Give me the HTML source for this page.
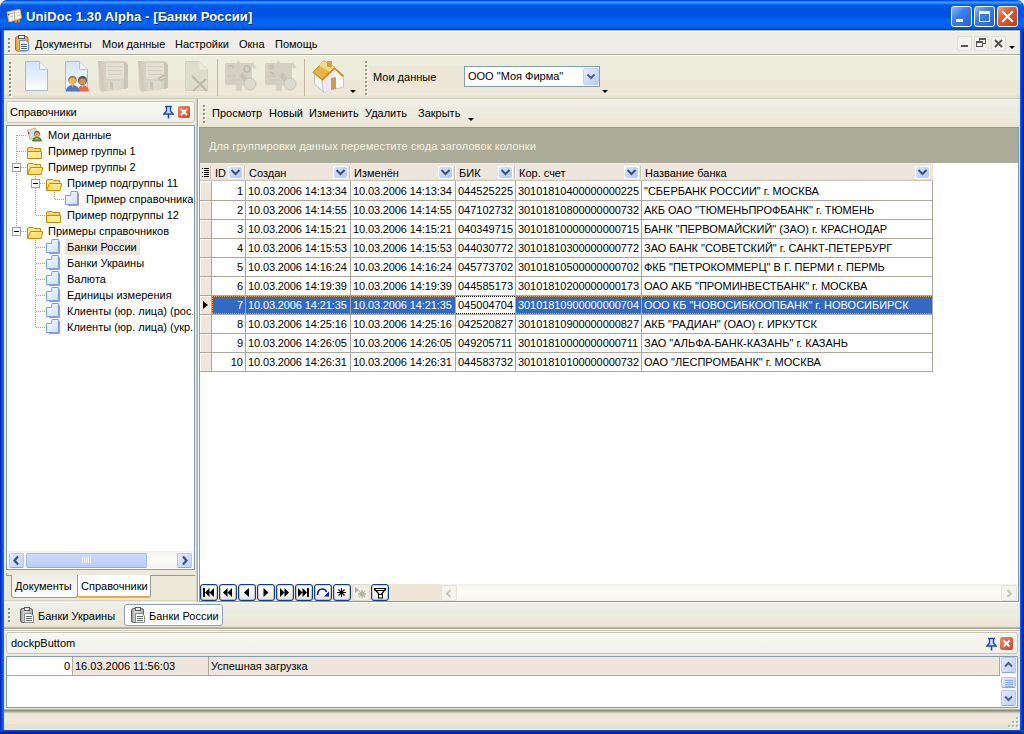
<!DOCTYPE html><html><head><meta charset="utf-8"><title>UniDoc</title><style>
*{margin:0;padding:0;box-sizing:border-box}
html,body{width:1024px;height:734px;overflow:hidden;background:#ECE9D8}
body{position:relative;font-family:"Liberation Sans",sans-serif;font-size:11px;color:#000}
div{position:absolute}
.t{white-space:pre;line-height:13px}
</style></head><body>
<div style="left:0px;top:0px;width:10px;height:10px;background:#F4F4F4"></div>
<div style="left:1014px;top:0px;width:10px;height:10px;background:#F4F4F4"></div>
<div style="left:0px;top:0px;width:1024px;height:30px;background:linear-gradient(to bottom,#0050E0 0px,#0050E0 1px,#2A80F8 1px,#2A80F8 2px,#3A96FF 2px,#3A96FF 3px,#2088FC 3px,#2088FC 4px,#0868F0 4px,#0868F0 5px,#005AE8 5px,#0054E3 8px,#0052E2 16px,#0062F2 20px,#0066F8 24px,#0062F4 27px,#0050E0 28px,#0050E0 29px,#0040C8 29px);border-radius:7px 7px 0 0"></div>
<div style="left:0px;top:30px;width:4px;height:704px;background:linear-gradient(to right,#0020B8 0,#0038D0 1px,#0050E6 2px,#1264F2 3px,#1264F2 4px)"></div>
<div style="left:1020px;top:30px;width:4px;height:704px;background:linear-gradient(to right,#1264F2 0,#0050E6 1px,#0038D0 2px,#0020B0 3px,#0018A0 4px)"></div>
<div style="left:0px;top:730px;width:1024px;height:4px;background:linear-gradient(to bottom,#0050E8 0,#0040D4 1px,#002CB4 2px,#001A94 3px,#001890 4px)"></div>
<div style="left:5px;top:8px;width:18px;height:16px"><svg width="18" height="16" viewBox="0 0 18 16"><path d="M2 4 L9 2.5 L10 12.5 L4 14 Z" fill="#EEF4FF" stroke="#F0A030" stroke-width="1"/><path d="M9 2.5 L15 1.5 L16.5 10 L10 12.5 Z" fill="#F8FAFF" stroke="#F0B040" stroke-width="1"/><path d="M4 6 L8 5 M5 9 L8.5 8" stroke="#A8B8E0"/><path d="M11.5 5 L14.5 4.5 M12 7.5 L15 7" stroke="#B0C0E8"/><rect x="3" y="5.5" width="1.5" height="2" fill="#E04020"/><path d="M11 12 V15 M14 11 V14.5" stroke="#F0A020" stroke-width="1.5"/></svg></div>
<div class="t" style="left:26px;top:9px;font-size:13px;font-weight:bold;color:#fff;line-height:15px;letter-spacing:0.1px;text-shadow:1px 1px 0 #0A2C9A">UniDoc 1.30 Alpha - [Банки России]</div>
<div style="left:951px;top:6px;width:21px;height:21px;background:linear-gradient(135deg,#8EB8FF 0%,#3C7EF0 40%,#2460DC 100%);border:1px solid #fff;border-radius:3px"><div style="left:4px;top:12px;width:7px;height:3px;background:#fff"></div></div>
<div style="left:974px;top:6px;width:21px;height:21px;background:linear-gradient(135deg,#8EB8FF 0%,#3C7EF0 40%,#2460DC 100%);border:1px solid #fff;border-radius:3px"><div style="left:4px;top:4px;width:11px;height:11px;border:1px solid #fff;border-top-width:3px"></div></div>
<div style="left:997px;top:6px;width:21px;height:21px;background:linear-gradient(135deg,#F0A080 0%,#E05A30 40%,#C83C10 100%);border:1px solid #fff;border-radius:3px"><svg width="21" height="21" style="position:absolute;left:0;top:0"><path d="M5 5 L14 14 M14 5 L5 14" stroke="#fff" stroke-width="2.2" stroke-linecap="square"/></svg></div>
<div style="left:4px;top:30px;width:1016px;height:26px;background:linear-gradient(to bottom,#B8B498 0,#B8B498 1px,#FFFFFF 1px,#FFFFFF 2px,#EEEDE6 2px,#EEEDE6 23px,#F0F0E2 23px,#F0F0E2 24px,#ACAC98 24px,#ACAC98 25px,#FFFFFF 25px)"></div>
<div style="left:9px;top:39px;width:2px;height:2px;background:#FFFFFF"></div><div style="left:8px;top:38px;width:2px;height:2px;background:#8E8E7E"></div><div style="left:9px;top:43px;width:2px;height:2px;background:#FFFFFF"></div><div style="left:8px;top:42px;width:2px;height:2px;background:#8E8E7E"></div><div style="left:9px;top:47px;width:2px;height:2px;background:#FFFFFF"></div><div style="left:8px;top:46px;width:2px;height:2px;background:#8E8E7E"></div><div style="left:9px;top:51px;width:2px;height:2px;background:#FFFFFF"></div><div style="left:8px;top:50px;width:2px;height:2px;background:#8E8E7E"></div>
<div style="left:15px;top:35px;width:15px;height:17px"><svg width="15" height="17" viewBox="0 0 15 17"><defs><linearGradient id="cbg" x1="0" y1="0" x2="1" y2="0"><stop offset="0" stop-color="#E89830"/><stop offset="0.4" stop-color="#FCD860"/><stop offset="1" stop-color="#E8A030"/></linearGradient></defs><rect x="0.5" y="1.5" width="12.5" height="14.5" rx="2" fill="url(#cbg)" stroke="#C06818"/><rect x="3.5" y="0.5" width="6" height="3" fill="#E8ECF4" stroke="#585858"/><path d="M4.5 5.5 H11 L13.5 8 V15.5 H4.5 Z" fill="#F4F8FF" stroke="#6C8CD4"/><rect x="5" y="6" width="5" height="3" fill="#D8ECFC"/><path d="M6 9.5 H12 M6 11.5 H12 M6 13.5 H12" stroke="#4A68A8"/></svg></div>
<div class="t" style="left:35px;top:38px;">Документы</div>
<div class="t" style="left:102px;top:38px;">Мои данные</div>
<div class="t" style="left:175px;top:38px;">Настройки</div>
<div class="t" style="left:239px;top:38px;">Окна</div>
<div class="t" style="left:275px;top:38px;">Помощь</div>
<div style="left:957px;top:36px;width:15px;height:15px;background:#F4F3EE;border:1px solid #E0DED2;border-radius:2px"><div style="left:3px;top:8px;width:7px;height:2px;background:#555"></div></div>
<div style="left:974px;top:36px;width:15px;height:15px;background:#F4F3EE;border:1px solid #E0DED2;border-radius:2px"><div style="left:4px;top:1px;width:7px;height:6px;border:1px solid #555;border-top-width:2px"></div><div style="left:1px;top:4px;width:7px;height:6px;border:1px solid #555;border-top-width:2px;background:#F4F3EE"></div></div>
<div style="left:991px;top:36px;width:15px;height:15px;background:#F4F3EE;border:1px solid #E0DED2;border-radius:2px"><svg width="13" height="13" style="position:absolute;left:0;top:0"><path d="M3 3 L10 10 M10 3 L3 10" stroke="#555" stroke-width="2"/></svg></div>
<div style="left:1009px;top:46px;width:0;height:0;border-left:3px solid transparent;border-right:3px solid transparent;border-top:3px solid #000"></div>
<div style="left:4px;top:56px;width:1016px;height:43px;background:linear-gradient(to bottom,#EDEDDE 0,#EDEDDE 24px,#EEE6D6 24px,#EEE6D6 39px,#E4E4D4 39px,#E4E4D4 40px,#E2E2CC 40px,#E2E2CC 42px,#CCCCB8 42px)"></div>
<div style="left:10px;top:63px;width:2px;height:2px;background:#FFFFFF"></div><div style="left:9px;top:62px;width:2px;height:2px;background:#8E8E7E"></div><div style="left:10px;top:67px;width:2px;height:2px;background:#FFFFFF"></div><div style="left:9px;top:66px;width:2px;height:2px;background:#8E8E7E"></div><div style="left:10px;top:71px;width:2px;height:2px;background:#FFFFFF"></div><div style="left:9px;top:70px;width:2px;height:2px;background:#8E8E7E"></div><div style="left:10px;top:75px;width:2px;height:2px;background:#FFFFFF"></div><div style="left:9px;top:74px;width:2px;height:2px;background:#8E8E7E"></div><div style="left:10px;top:79px;width:2px;height:2px;background:#FFFFFF"></div><div style="left:9px;top:78px;width:2px;height:2px;background:#8E8E7E"></div><div style="left:10px;top:83px;width:2px;height:2px;background:#FFFFFF"></div><div style="left:9px;top:82px;width:2px;height:2px;background:#8E8E7E"></div><div style="left:10px;top:87px;width:2px;height:2px;background:#FFFFFF"></div><div style="left:9px;top:86px;width:2px;height:2px;background:#8E8E7E"></div><div style="left:10px;top:91px;width:2px;height:2px;background:#FFFFFF"></div><div style="left:9px;top:90px;width:2px;height:2px;background:#8E8E7E"></div><div style="left:10px;top:95px;width:2px;height:2px;background:#FFFFFF"></div><div style="left:9px;top:94px;width:2px;height:2px;background:#8E8E7E"></div>
<div style="left:24px;top:60px;width:26px;height:32px"><svg width="26" height="32" viewBox="0 0 26 32"><defs><linearGradient id="dg" x1="0" y1="0" x2="0" y2="1"><stop offset="0" stop-color="#D4E4F8"/><stop offset="0.6" stop-color="#E8F2FC"/><stop offset="1" stop-color="#FFFFFF"/></linearGradient></defs><path d="M1.5 1.5 H15.5 L23.5 9.5 V30.5 H1.5 Z" fill="url(#dg)" stroke="#A8B8D8"/><path d="M15.5 1.5 V9.5 H23.5" fill="#F4F8FC" stroke="#B8C4D8"/></svg></div>
<div style="left:64px;top:60px;width:27px;height:33px"><svg width="27" height="33" viewBox="0 0 27 33"><path d="M1.5 1.5 H15.5 L23.5 9.5 V30.5 H1.5 Z" fill="url(#dg)" stroke="#A8B8D8"/><path d="M15.5 1.5 V9.5 H23.5" fill="#F4F8FC" stroke="#B8C4D8"/><circle cx="18.5" cy="20.5" r="4.5" fill="#585050"/><circle cx="18.5" cy="21.5" r="3.3" fill="#D8904C"/><path d="M14 31.5 Q14 25 18.5 25 Q24 25 25 31.5 Z" fill="#E86840"/><path d="M17.5 25.5 L18.5 28 L19.5 25.5" fill="#C8E0F0"/><circle cx="8.5" cy="20" r="4.3" fill="#8C7860"/><circle cx="8.5" cy="21.2" r="3.5" fill="#F4B840"/><path d="M2 31.5 Q2 25 8.5 25 Q14.5 25 15.5 31.5 Z" fill="#4A78D0"/><path d="M8 25.5 L8.5 28 L9 25.5" fill="#E0F0FF"/></svg></div>
<div style="left:96px;top:58px;width:34px;height:36px"><svg width="34" height="36" viewBox="0 0 34 36"><path d="M2 3 H29 L32 6 V30 L6 34 L3 31 Z" fill="#D6D2C4"/><path d="M28 4 L32 7 V30 L28 31 Z" fill="#C8C4B6"/><path d="M2 3 L6 34 L9 33 L6 3 Z" fill="#CFCABD"/><rect x="10" y="5" width="18" height="16" fill="#E2E0D4"/><path d="M12 8.5 H26 M12 12.5 H26 M12 16.5 H26" stroke="#D0CCBE"/><path d="M12 23 H25 V32 L12 33 Z" fill="#DCD8CC"/><rect x="14" y="24" width="3" height="7" fill="#C8C4B6"/></svg></div>
<div style="left:136px;top:58px;width:34px;height:36px"><svg width="34" height="36" viewBox="0 0 34 36"><path d="M2 3 H29 L32 6 V30 L6 34 L3 31 Z" fill="#D6D2C4"/><path d="M28 4 L32 7 V30 L28 31 Z" fill="#C8C4B6"/><path d="M2 3 L6 34 L9 33 L6 3 Z" fill="#CFCABD"/><rect x="10" y="5" width="18" height="16" fill="#E2E0D4"/><path d="M12 8.5 H26 M12 12.5 H26 M12 16.5 H26" stroke="#D0CCBE"/><path d="M12 23 H25 V32 L12 33 Z" fill="#DCD8CC"/><rect x="14" y="24" width="3" height="7" fill="#C8C4B6"/><path d="M21 20 L28 16 L31 20 L25 24 Z" fill="#C4C0B2"/><path d="M24 21 L29 19" stroke="#DEDBD0"/></svg></div>
<div style="left:184px;top:60px;width:25px;height:32px"><svg width="25" height="32" viewBox="0 0 25 32"><path d="M1.5 1.5 H15.5 L23.5 9.5 V30.5 H1.5 Z" fill="#DEDCCC" stroke="#D6CEC0"/><path d="M15.5 1.5 V9.5 H23.5" fill="#ECEAE0"/><path d="M8 16 L23 31 M22 19 L9 31" stroke="#BCBAA8" stroke-width="2"/></svg></div>
<div style="left:217px;top:59px;width:1px;height:37px;background:#C5B99C"></div>
<div style="left:222px;top:58px;width:36px;height:36px"><svg width="36" height="36" viewBox="0 0 36 36"><rect x="3" y="5" width="27" height="22" rx="1" fill="#D4D0C4"/><path d="M16.5 2 L19 6 H14 Z" fill="#D4D0C4"/><path d="M31 4 L33 8 L35 9 L32 11 L30 9 L28 8 Z" fill="#D4D0C4"/><circle cx="25" cy="11" r="3" fill="none" stroke="#BDB9AC" stroke-width="1.5"/><path d="M6 9 Q9 6 12 10" stroke="#C0BCAE" fill="none" stroke-width="1.5"/><path d="M5 18 H14 M7 22 H18" stroke="#CCC8BA" stroke-width="1.5"/><rect x="14" y="26" width="6" height="7" fill="#D4D0C4"/><path d="M19 16 L25 24" stroke="#C6C2B4" stroke-width="5"/><circle cx="28" cy="26" r="6" fill="#DCDACE" stroke="#CAC6B8"/></svg></div>
<div style="left:262px;top:58px;width:36px;height:36px"><svg width="36" height="36" viewBox="0 0 36 36"><rect x="3" y="5" width="27" height="22" rx="1" fill="#D4D0C4"/><path d="M16.5 2 L19 6 H14 Z" fill="#D4D0C4"/><path d="M31 4 L33 8 L35 9 L32 11 L30 9 L28 8 Z" fill="#D4D0C4"/><path d="M6 8 L11 6 L13 10 L8 12 Z" fill="#C6C2B4"/><path d="M8 14 L12 16" stroke="#C0BCAE" stroke-width="1.5"/><path d="M5 18 H14 M7 22 H18" stroke="#CCC8BA" stroke-width="1.5"/><rect x="14" y="26" width="6" height="7" fill="#D4D0C4"/><path d="M19 16 L25 24" stroke="#C6C2B4" stroke-width="5"/><circle cx="28" cy="26" r="6" fill="#DCDACE" stroke="#CAC6B8"/></svg></div>
<div style="left:304px;top:59px;width:1px;height:37px;background:#C5B99C"></div>
<div style="left:308px;top:56px;width:40px;height:40px"><svg width="40" height="40" viewBox="0 0 40 40"><path d="M6.5 18 L14 24 L15.5 36 L6.5 28 Z" fill="#F4F4F4" stroke="#B8B8B8" stroke-width="0.8"/><path d="M14 24 L26.5 12 L35.5 19.5 V31 L15.5 36 Z" fill="#FFFFFF" stroke="#B8B8B8" stroke-width="0.8"/><path d="M15 24 L26.5 13 L27 34 L16 36 Z" fill="#ECEAF0"/><path d="M23 22 L28 21 V33 L23 34 Z" fill="#D49A40"/><path d="M5 16.5 L15.5 5 L26.5 11 L14 23.5 Z" fill="#E8B440" stroke="#C08020" stroke-width="1"/><path d="M15.5 5 L26.5 11 L22 16 L11 9.5 Z" fill="#F4D890"/><path d="M26.5 11 L36 19.5 L34.5 21 L26.5 13.5 L14.5 25 L13.5 23.5 Z" fill="#D09030"/><rect x="19" y="5" width="5" height="6" fill="#D8A040"/></svg></div>
<div style="left:350px;top:90px;width:0;height:0;border-left:3px solid transparent;border-right:3px solid transparent;border-top:3px solid #000"></div>
<div style="left:366px;top:62px;width:2px;height:2px;background:#FFFFFF"></div><div style="left:365px;top:61px;width:2px;height:2px;background:#9A9A8A"></div><div style="left:366px;top:66px;width:2px;height:2px;background:#FFFFFF"></div><div style="left:365px;top:65px;width:2px;height:2px;background:#9A9A8A"></div><div style="left:366px;top:70px;width:2px;height:2px;background:#FFFFFF"></div><div style="left:365px;top:69px;width:2px;height:2px;background:#9A9A8A"></div><div style="left:366px;top:74px;width:2px;height:2px;background:#FFFFFF"></div><div style="left:365px;top:73px;width:2px;height:2px;background:#9A9A8A"></div><div style="left:366px;top:78px;width:2px;height:2px;background:#FFFFFF"></div><div style="left:365px;top:77px;width:2px;height:2px;background:#9A9A8A"></div><div style="left:366px;top:82px;width:2px;height:2px;background:#FFFFFF"></div><div style="left:365px;top:81px;width:2px;height:2px;background:#9A9A8A"></div><div style="left:366px;top:86px;width:2px;height:2px;background:#FFFFFF"></div><div style="left:365px;top:85px;width:2px;height:2px;background:#9A9A8A"></div><div style="left:366px;top:90px;width:2px;height:2px;background:#FFFFFF"></div><div style="left:365px;top:89px;width:2px;height:2px;background:#9A9A8A"></div><div style="left:366px;top:94px;width:2px;height:2px;background:#FFFFFF"></div><div style="left:365px;top:93px;width:2px;height:2px;background:#9A9A8A"></div>
<div style="left:370px;top:66px;width:228px;height:21px;background:#EBE6D6"></div>
<div class="t" style="left:373px;top:71px;">Мои данные</div>
<div style="left:464px;top:66px;width:136px;height:21px;background:#fff;border:1px solid #7F9DB9"><div class="t" style="left:3px;top:3px;">ООО "Моя Фирма"</div><div style="left:118px;top:1px;width:16px;height:17px;background:linear-gradient(135deg,#E4ECFC,#B8CCF8);border-radius:2px;border:1px solid #C0D0F4"><svg width="14" height="15" style="position:absolute;left:0;top:0"><path d="M3.5 5.5 L7 9 L10.5 5.5" stroke="#4D6185" stroke-width="2" fill="none"/></svg></div></div>
<div style="left:602px;top:90px;width:0;height:0;border-left:3px solid transparent;border-right:3px solid transparent;border-top:3px solid #000"></div>
<div style="left:4px;top:99px;width:193px;height:506px;background:#ECE9D8"></div>
<div style="left:6px;top:101px;width:189px;height:22px;background:linear-gradient(to bottom,#FFFFFF 0,#FFFFFF 1px,#F6F6F0 1px,#F4F4EE 60%,#F0F0E8);border:1px solid #C8C6B2;border-radius:3px"></div>
<div class="t" style="left:10px;top:106px;">Справочники</div>
<div style="left:163px;top:105px;width:11px;height:14px"><svg width="11" height="14" viewBox="0 0 11 14"><path d="M2 1.5 H9 M3.5 1.5 V6 L1 9 H10 L7.5 6 V1.5" fill="#CFE0FF" stroke="#1848C8" stroke-width="1.4"/><path d="M5.5 9 V13.5" stroke="#1848C8" stroke-width="1.6"/></svg></div>
<div style="left:178px;top:106px;width:12px;height:12px;background:linear-gradient(135deg,#F08868,#D84020);border-radius:2px"><svg width="12" height="12" style="position:absolute;left:0;top:0"><path d="M3 3 L9 9 M9 3 L3 9" stroke="#fff" stroke-width="2"/></svg></div>
<div style="left:6px;top:125px;width:189px;height:445px;background:#fff;border:1px solid #7F9DB9"></div>
<div style="left:16px;top:135px;width:1px;height:97px;background:repeating-linear-gradient(to bottom,#A0A0A0 0 1px,transparent 1px 2px)"></div>
<div style="left:17px;top:135px;width:9px;height:1px;background:repeating-linear-gradient(to right,#A0A0A0 0 1px,transparent 1px 2px)"></div>
<div style="left:17px;top:151px;width:9px;height:1px;background:repeating-linear-gradient(to right,#A0A0A0 0 1px,transparent 1px 2px)"></div>
<div style="left:21px;top:167px;width:5px;height:1px;background:repeating-linear-gradient(to right,#A0A0A0 0 1px,transparent 1px 2px)"></div>
<div style="left:21px;top:231px;width:5px;height:1px;background:repeating-linear-gradient(to right,#A0A0A0 0 1px,transparent 1px 2px)"></div>
<div style="left:35px;top:176px;width:1px;height:40px;background:repeating-linear-gradient(to bottom,#A0A0A0 0 1px,transparent 1px 2px)"></div>
<div style="left:40px;top:183px;width:5px;height:1px;background:repeating-linear-gradient(to right,#A0A0A0 0 1px,transparent 1px 2px)"></div>
<div style="left:36px;top:215px;width:9px;height:1px;background:repeating-linear-gradient(to right,#A0A0A0 0 1px,transparent 1px 2px)"></div>
<div style="left:54px;top:192px;width:1px;height:8px;background:repeating-linear-gradient(to bottom,#A0A0A0 0 1px,transparent 1px 2px)"></div>
<div style="left:55px;top:199px;width:9px;height:1px;background:repeating-linear-gradient(to right,#A0A0A0 0 1px,transparent 1px 2px)"></div>
<div style="left:35px;top:240px;width:1px;height:88px;background:repeating-linear-gradient(to bottom,#A0A0A0 0 1px,transparent 1px 2px)"></div>
<div style="left:36px;top:247px;width:9px;height:1px;background:repeating-linear-gradient(to right,#A0A0A0 0 1px,transparent 1px 2px)"></div>
<div style="left:36px;top:263px;width:9px;height:1px;background:repeating-linear-gradient(to right,#A0A0A0 0 1px,transparent 1px 2px)"></div>
<div style="left:36px;top:279px;width:9px;height:1px;background:repeating-linear-gradient(to right,#A0A0A0 0 1px,transparent 1px 2px)"></div>
<div style="left:36px;top:295px;width:9px;height:1px;background:repeating-linear-gradient(to right,#A0A0A0 0 1px,transparent 1px 2px)"></div>
<div style="left:36px;top:311px;width:9px;height:1px;background:repeating-linear-gradient(to right,#A0A0A0 0 1px,transparent 1px 2px)"></div>
<div style="left:36px;top:327px;width:9px;height:1px;background:repeating-linear-gradient(to right,#A0A0A0 0 1px,transparent 1px 2px)"></div>
<div style="left:26px;top:127px;width:18px;height:17px"><svg width="18" height="17" viewBox="0 0 18 17"><path d="M1.5 3.5 L9.5 1 L12 10 L4 12.5 Z" fill="#C8E0FC" stroke="#F0A860"/><rect x="2" y="5" width="1.5" height="2" fill="#E04020"/><circle cx="11" cy="6.8" r="2.9" fill="#6A5028"/><circle cx="11" cy="7.6" r="2.3" fill="#F4A838"/><path d="M6.5 14 Q7 10.2 11 10.2 Q15 10.2 15.5 14 Z" fill="#6C9A50" stroke="#3C5A30" stroke-width="0.8"/><path d="M10 10.7 L11 13 L12 10.7" fill="#B0D880"/></svg></div><div class="t" style="left:48px;top:129px;">Мои данные</div>
<div style="left:26px;top:143px;width:18px;height:17px"><svg width="18" height="17" viewBox="0 0 18 17"><path d="M1.5 15.5 V6 Q1.5 4.5 3 4.5 H7 L8 5.5 H14.5 V15.5 Z" fill="#F8D860" stroke="#C48E00"/><path d="M1.5 8.5 H15.5 V15.5 H1.5 Z" fill="#FFE690" stroke="#C48E00"/><path d="M3 10 H14" stroke="#FFF6C8"/></svg></div><div class="t" style="left:48px;top:145px;">Пример группы 1</div>
<div style="left:26px;top:159px;width:18px;height:17px"><svg width="18" height="17" viewBox="0 0 18 17"><path d="M1.5 15.5 V6 Q1.5 4.5 3 4.5 H7.5 L8.5 5.5 H14.5 V8.5" fill="#FFE680" stroke="#C48E00"/><path d="M1.5 15.5 L4.5 8.5 H16.5 V10 L15 15.5 Z" fill="#FFDC70" stroke="#C48E00"/><path d="M5.5 10 H15" stroke="#FFF6D0"/></svg></div><div class="t" style="left:48px;top:161px;">Пример группы 2</div><div style="left:12px;top:163px;width:9px;height:9px;background:#fff;border:1px solid #A0A09A"><div style="left:1px;top:3px;width:5px;height:1px;background:#000"></div></div>
<div style="left:45px;top:175px;width:18px;height:17px"><svg width="18" height="17" viewBox="0 0 18 17"><path d="M1.5 15.5 V6 Q1.5 4.5 3 4.5 H7.5 L8.5 5.5 H14.5 V8.5" fill="#FFE680" stroke="#C48E00"/><path d="M1.5 15.5 L4.5 8.5 H16.5 V10 L15 15.5 Z" fill="#FFDC70" stroke="#C48E00"/><path d="M5.5 10 H15" stroke="#FFF6D0"/></svg></div><div class="t" style="left:67px;top:177px;">Пример подгруппы 11</div><div style="left:31px;top:179px;width:9px;height:9px;background:#fff;border:1px solid #A0A09A"><div style="left:1px;top:3px;width:5px;height:1px;background:#000"></div></div>
<div style="left:64px;top:191px;width:18px;height:17px"><svg width="18" height="17" viewBox="0 0 18 17"><defs><linearGradient id="tdg" x1="0" y1="0" x2="1" y2="1"><stop offset="0" stop-color="#FFFFFF"/><stop offset="1" stop-color="#C8DCFC"/></linearGradient></defs><path d="M14.5 2 V14.5 H4" stroke="#A0A0A8" fill="none"/><path d="M1.5 4.5 H6.5 L7 0.5 H13.5 V13.5 H1.5 Z" fill="url(#tdg)" stroke="#7C9CE8"/><path d="M3 12 L7 8 L9 10 L12 6" stroke="#E0ECFF" fill="none"/></svg></div><div class="t" style="left:86px;top:193px;">Пример справочника</div>
<div style="left:45px;top:207px;width:18px;height:17px"><svg width="18" height="17" viewBox="0 0 18 17"><path d="M1.5 15.5 V6 Q1.5 4.5 3 4.5 H7 L8 5.5 H14.5 V15.5 Z" fill="#F8D860" stroke="#C48E00"/><path d="M1.5 8.5 H15.5 V15.5 H1.5 Z" fill="#FFE690" stroke="#C48E00"/><path d="M3 10 H14" stroke="#FFF6C8"/></svg></div><div class="t" style="left:67px;top:209px;">Пример подгруппы 12</div>
<div style="left:26px;top:223px;width:18px;height:17px"><svg width="18" height="17" viewBox="0 0 18 17"><path d="M1.5 15.5 V6 Q1.5 4.5 3 4.5 H7.5 L8.5 5.5 H14.5 V8.5" fill="#FFE680" stroke="#C48E00"/><path d="M1.5 15.5 L4.5 8.5 H16.5 V10 L15 15.5 Z" fill="#FFDC70" stroke="#C48E00"/><path d="M5.5 10 H15" stroke="#FFF6D0"/></svg></div><div class="t" style="left:48px;top:225px;">Примеры справочников</div><div style="left:12px;top:227px;width:9px;height:9px;background:#fff;border:1px solid #A0A09A"><div style="left:1px;top:3px;width:5px;height:1px;background:#000"></div></div>
<div style="left:45px;top:239px;width:18px;height:17px"><svg width="18" height="17" viewBox="0 0 18 17"><defs><linearGradient id="tdg" x1="0" y1="0" x2="1" y2="1"><stop offset="0" stop-color="#FFFFFF"/><stop offset="1" stop-color="#C8DCFC"/></linearGradient></defs><path d="M14.5 2 V14.5 H4" stroke="#A0A0A8" fill="none"/><path d="M1.5 4.5 H6.5 L7 0.5 H13.5 V13.5 H1.5 Z" fill="url(#tdg)" stroke="#7C9CE8"/><path d="M3 12 L7 8 L9 10 L12 6" stroke="#E0ECFF" fill="none"/></svg></div><div style="left:65px;top:239px;width:75px;height:16px;background:#EEE6DA"></div><div class="t" style="left:67px;top:241px;">Банки России</div>
<div style="left:45px;top:255px;width:18px;height:17px"><svg width="18" height="17" viewBox="0 0 18 17"><defs><linearGradient id="tdg" x1="0" y1="0" x2="1" y2="1"><stop offset="0" stop-color="#FFFFFF"/><stop offset="1" stop-color="#C8DCFC"/></linearGradient></defs><path d="M14.5 2 V14.5 H4" stroke="#A0A0A8" fill="none"/><path d="M1.5 4.5 H6.5 L7 0.5 H13.5 V13.5 H1.5 Z" fill="url(#tdg)" stroke="#7C9CE8"/><path d="M3 12 L7 8 L9 10 L12 6" stroke="#E0ECFF" fill="none"/></svg></div><div class="t" style="left:67px;top:257px;">Банки Украины</div>
<div style="left:45px;top:271px;width:18px;height:17px"><svg width="18" height="17" viewBox="0 0 18 17"><defs><linearGradient id="tdg" x1="0" y1="0" x2="1" y2="1"><stop offset="0" stop-color="#FFFFFF"/><stop offset="1" stop-color="#C8DCFC"/></linearGradient></defs><path d="M14.5 2 V14.5 H4" stroke="#A0A0A8" fill="none"/><path d="M1.5 4.5 H6.5 L7 0.5 H13.5 V13.5 H1.5 Z" fill="url(#tdg)" stroke="#7C9CE8"/><path d="M3 12 L7 8 L9 10 L12 6" stroke="#E0ECFF" fill="none"/></svg></div><div class="t" style="left:67px;top:273px;">Валюта</div>
<div style="left:45px;top:287px;width:18px;height:17px"><svg width="18" height="17" viewBox="0 0 18 17"><defs><linearGradient id="tdg" x1="0" y1="0" x2="1" y2="1"><stop offset="0" stop-color="#FFFFFF"/><stop offset="1" stop-color="#C8DCFC"/></linearGradient></defs><path d="M14.5 2 V14.5 H4" stroke="#A0A0A8" fill="none"/><path d="M1.5 4.5 H6.5 L7 0.5 H13.5 V13.5 H1.5 Z" fill="url(#tdg)" stroke="#7C9CE8"/><path d="M3 12 L7 8 L9 10 L12 6" stroke="#E0ECFF" fill="none"/></svg></div><div class="t" style="left:67px;top:289px;">Единицы измерения</div>
<div style="left:45px;top:303px;width:18px;height:17px"><svg width="18" height="17" viewBox="0 0 18 17"><defs><linearGradient id="tdg" x1="0" y1="0" x2="1" y2="1"><stop offset="0" stop-color="#FFFFFF"/><stop offset="1" stop-color="#C8DCFC"/></linearGradient></defs><path d="M14.5 2 V14.5 H4" stroke="#A0A0A8" fill="none"/><path d="M1.5 4.5 H6.5 L7 0.5 H13.5 V13.5 H1.5 Z" fill="url(#tdg)" stroke="#7C9CE8"/><path d="M3 12 L7 8 L9 10 L12 6" stroke="#E0ECFF" fill="none"/></svg></div><div class="t" style="left:67px;top:305px;">Клиенты (юр. лица) (рос.</div>
<div style="left:45px;top:319px;width:18px;height:17px"><svg width="18" height="17" viewBox="0 0 18 17"><defs><linearGradient id="tdg" x1="0" y1="0" x2="1" y2="1"><stop offset="0" stop-color="#FFFFFF"/><stop offset="1" stop-color="#C8DCFC"/></linearGradient></defs><path d="M14.5 2 V14.5 H4" stroke="#A0A0A8" fill="none"/><path d="M1.5 4.5 H6.5 L7 0.5 H13.5 V13.5 H1.5 Z" fill="url(#tdg)" stroke="#7C9CE8"/><path d="M3 12 L7 8 L9 10 L12 6" stroke="#E0ECFF" fill="none"/></svg></div><div class="t" style="left:67px;top:321px;">Клиенты (юр. лица) (укр.</div>
<div style="left:193px;top:126px;width:1px;height:442px;background:#fff"></div>
<div style="left:7px;top:551px;width:187px;height:17px;background:linear-gradient(to bottom,#EEEDE5 0,#F6F5F0 2px,#FBFBF8 8px,#F3F1EC 17px)"></div>
<div style="left:9px;top:553px;width:15px;height:15px;background:linear-gradient(135deg,#E0EAFE,#BCD0F8);border:1px solid #B4C8F4;border-bottom-color:#8CA4E0;border-radius:2px"><svg width="13" height="13" style="position:absolute;left:0;top:0"><path d="M8 2.5 L4.5 6.5 L8 10.5" stroke="#3C5078" stroke-width="2.2" fill="none"/></svg></div>
<div style="left:177px;top:553px;width:15px;height:15px;background:linear-gradient(135deg,#E0EAFE,#BCD0F8);border:1px solid #B4C8F4;border-bottom-color:#8CA4E0;border-radius:2px"><svg width="13" height="13" style="position:absolute;left:0;top:0"><path d="M5 2.5 L8.5 6.5 L5 10.5" stroke="#3C5078" stroke-width="2.2" fill="none"/></svg></div>
<div style="left:26px;top:553px;width:121px;height:15px;background:linear-gradient(to bottom,#CCDCFC,#B8CCF8);border:1px solid #A8BCEC;border-bottom-color:#90A8E4;border-radius:2px"><div style="left:55px;top:3px;width:1px;height:6px;background:#F0F4FF"></div><div style="left:57px;top:3px;width:1px;height:6px;background:#F0F4FF"></div><div style="left:59px;top:3px;width:1px;height:6px;background:#F0F4FF"></div><div style="left:61px;top:3px;width:1px;height:6px;background:#F0F4FF"></div><div style="left:63px;top:3px;width:1px;height:6px;background:#F0F4FF"></div></div>
<div style="left:6px;top:573px;width:1px;height:2px;background:#919B9C"></div>
<div style="left:6px;top:575px;width:189px;height:1px;background:#919B9C"></div>
<div style="left:11px;top:575px;width:67px;height:23px;background:linear-gradient(to bottom,#F0F0EA,#F4F3EE 50%,#FCFCFA);border:1px solid #919B9C;border-top:none;border-radius:0 0 3px 3px"></div>
<div class="t" style="left:15px;top:580px;">Документы</div>
<div style="left:77px;top:575px;width:74px;height:23px;background:#FFFFFF;border:1px solid #919B9C;border-top:none;border-bottom:2px solid #F8A830;border-radius:0 0 3px 3px"></div>
<div class="t" style="left:81px;top:580px;">Справочники</div>
<div style="left:4px;top:600px;width:193px;height:1px;background:#D8D4C4"></div>
<div style="left:195px;top:99px;width:4px;height:503px;background:linear-gradient(to right,#E8E6DC 0,#E8E6DC 1px,#D0CEC0 1px,#D0CEC0 2px,#A8A894 2px,#A8A894 3px,#FFFFFF 3px)"></div>
<div style="left:198px;top:99px;width:822px;height:28px;background:linear-gradient(to bottom,#F2F2EA 0px,#F2F2EA 1px,#EEEEE6 1px,#EEEEE6 8px,#ECECDC 8px,#ECECDC 20px,#EEE6D8 20px,#EEE6D8 25px,#E4E4D0 25px,#E4E4D0 28px)"></div>
<div style="left:198px;top:99px;width:1px;height:28px;background:#FAFAF6"></div>
<div style="left:204px;top:106px;width:2px;height:2px;background:#FFFFFF"></div><div style="left:203px;top:105px;width:2px;height:2px;background:#8E8E7E"></div><div style="left:204px;top:110px;width:2px;height:2px;background:#FFFFFF"></div><div style="left:203px;top:109px;width:2px;height:2px;background:#8E8E7E"></div><div style="left:204px;top:114px;width:2px;height:2px;background:#FFFFFF"></div><div style="left:203px;top:113px;width:2px;height:2px;background:#8E8E7E"></div><div style="left:204px;top:118px;width:2px;height:2px;background:#FFFFFF"></div><div style="left:203px;top:117px;width:2px;height:2px;background:#8E8E7E"></div><div style="left:204px;top:122px;width:2px;height:2px;background:#FFFFFF"></div><div style="left:203px;top:121px;width:2px;height:2px;background:#8E8E7E"></div>
<div class="t" style="left:212px;top:107px;">Просмотр</div>
<div class="t" style="left:269px;top:107px;">Новый</div>
<div class="t" style="left:309px;top:107px;">Изменить</div>
<div class="t" style="left:365px;top:107px;">Удалить</div>
<div class="t" style="left:418px;top:107px;">Закрыть</div>
<div style="left:468px;top:118px;width:0;height:0;border-left:3px solid transparent;border-right:3px solid transparent;border-top:3px solid #000"></div>
<div style="left:199px;top:127px;width:820px;height:475px;background:#fff;border:1px solid #7F9DB9"></div>
<div style="left:200px;top:128px;width:818px;height:35px;background-color:#ABAD99;background-image:radial-gradient(circle at 0.5px 0.5px,#A4A29C 0.7px,transparent 0.9px);background-size:8px 8px"></div>
<div class="t" style="left:209px;top:140px;color:#F6F1DC;letter-spacing:0.1px">Для группировки данных переместите сюда заголовок колонки</div>
<div style="left:200px;top:163px;width:733px;height:18px;background:linear-gradient(to bottom,#F2EAE0 0,#F2EAE0 1px,#EEE6DC 1px,#EEE6DC 16px,#E2E0CE 16px,#E2E0CE 17px,#CEC6B4 17px)"></div>
<div style="left:202px;top:167px;width:8px;height:11px"><svg width="8" height="11" viewBox="0 0 8 11"><path d="M0 1.5 H1 M0 5.5 H1 M0 9.5 H1 M2 1.5 H7 M2 3.5 H7 M2 5.5 H7 M2 7.5 H7 M2 9.5 H7" stroke="#000" stroke-width="1"/></svg></div>
<div style="left:210px;top:166px;width:1px;height:13px;background:#C9C2AC"></div>
<div style="left:211px;top:166px;width:1px;height:13px;background:#fff"></div>
<div class="t" style="left:215px;top:167px;">ID</div>
<div style="left:228px;top:166px;width:15px;height:13px;background:#fff;border:1px solid #fff"><div style="left:0px;top:0px;width:13px;height:11px;background:linear-gradient(135deg,#D8E4FC,#B0C6F8);border-radius:2px"><svg width="13" height="11" style="position:absolute;left:0;top:0"><path d="M2.5 3 L6.5 7 L10.5 3" stroke="#3C5078" stroke-width="2" fill="none"/></svg></div></div>
<div style="left:244px;top:166px;width:1px;height:13px;background:#C9C2AC"></div>
<div style="left:245px;top:166px;width:1px;height:13px;background:#fff"></div>
<div class="t" style="left:249px;top:167px;">Создан</div>
<div style="left:333px;top:166px;width:15px;height:13px;background:#fff;border:1px solid #fff"><div style="left:0px;top:0px;width:13px;height:11px;background:linear-gradient(135deg,#D8E4FC,#B0C6F8);border-radius:2px"><svg width="13" height="11" style="position:absolute;left:0;top:0"><path d="M2.5 3 L6.5 7 L10.5 3" stroke="#3C5078" stroke-width="2" fill="none"/></svg></div></div>
<div style="left:349px;top:166px;width:1px;height:13px;background:#C9C2AC"></div>
<div style="left:350px;top:166px;width:1px;height:13px;background:#fff"></div>
<div class="t" style="left:354px;top:167px;">Изменён</div>
<div style="left:438px;top:166px;width:15px;height:13px;background:#fff;border:1px solid #fff"><div style="left:0px;top:0px;width:13px;height:11px;background:linear-gradient(135deg,#D8E4FC,#B0C6F8);border-radius:2px"><svg width="13" height="11" style="position:absolute;left:0;top:0"><path d="M2.5 3 L6.5 7 L10.5 3" stroke="#3C5078" stroke-width="2" fill="none"/></svg></div></div>
<div style="left:454px;top:166px;width:1px;height:13px;background:#C9C2AC"></div>
<div style="left:455px;top:166px;width:1px;height:13px;background:#fff"></div>
<div class="t" style="left:459px;top:167px;">БИК</div>
<div style="left:498px;top:166px;width:15px;height:13px;background:#fff;border:1px solid #fff"><div style="left:0px;top:0px;width:13px;height:11px;background:linear-gradient(135deg,#D8E4FC,#B0C6F8);border-radius:2px"><svg width="13" height="11" style="position:absolute;left:0;top:0"><path d="M2.5 3 L6.5 7 L10.5 3" stroke="#3C5078" stroke-width="2" fill="none"/></svg></div></div>
<div style="left:514px;top:166px;width:1px;height:13px;background:#C9C2AC"></div>
<div style="left:515px;top:166px;width:1px;height:13px;background:#fff"></div>
<div class="t" style="left:519px;top:167px;">Кор. счет</div>
<div style="left:624px;top:166px;width:15px;height:13px;background:#fff;border:1px solid #fff"><div style="left:0px;top:0px;width:13px;height:11px;background:linear-gradient(135deg,#D8E4FC,#B0C6F8);border-radius:2px"><svg width="13" height="11" style="position:absolute;left:0;top:0"><path d="M2.5 3 L6.5 7 L10.5 3" stroke="#3C5078" stroke-width="2" fill="none"/></svg></div></div>
<div style="left:640px;top:166px;width:1px;height:13px;background:#C9C2AC"></div>
<div style="left:641px;top:166px;width:1px;height:13px;background:#fff"></div>
<div class="t" style="left:645px;top:167px;">Название банка</div>
<div style="left:915px;top:166px;width:15px;height:13px;background:#fff;border:1px solid #fff"><div style="left:0px;top:0px;width:13px;height:11px;background:linear-gradient(135deg,#D8E4FC,#B0C6F8);border-radius:2px"><svg width="13" height="11" style="position:absolute;left:0;top:0"><path d="M2.5 3 L6.5 7 L10.5 3" stroke="#3C5078" stroke-width="2" fill="none"/></svg></div></div>
<div style="left:201px;top:183px;width:10px;height:17px;background:#EEE6DA"></div>
<div class="t" style="left:243px;top:185px;transform:translateX(-100%);color:#000">1</div>
<div class="t" style="left:248px;top:185px;color:#000;letter-spacing:-0.12px">10.03.2006 14:13:34</div>
<div class="t" style="left:353px;top:185px;color:#000;letter-spacing:-0.12px">10.03.2006 14:13:34</div>
<div class="t" style="left:458px;top:185px;color:#000">044525225</div>
<div class="t" style="left:518px;top:185px;color:#000;letter-spacing:-0.07px">30101810400000000225</div>
<div class="t" style="left:644px;top:185px;color:#000">"СБЕРБАНК РОССИИ" г. МОСКВА</div>
<div style="left:200px;top:200px;width:733px;height:1px;background:#ACA899"></div>
<div style="left:201px;top:202px;width:10px;height:17px;background:#EEE6DA"></div>
<div class="t" style="left:243px;top:204px;transform:translateX(-100%);color:#000">2</div>
<div class="t" style="left:248px;top:204px;color:#000;letter-spacing:-0.12px">10.03.2006 14:14:55</div>
<div class="t" style="left:353px;top:204px;color:#000;letter-spacing:-0.12px">10.03.2006 14:14:55</div>
<div class="t" style="left:458px;top:204px;color:#000">047102732</div>
<div class="t" style="left:518px;top:204px;color:#000;letter-spacing:-0.07px">30101810800000000732</div>
<div class="t" style="left:644px;top:204px;color:#000">АКБ ОАО "ТЮМЕНЬПРОФБАНК" г. ТЮМЕНЬ</div>
<div style="left:200px;top:219px;width:733px;height:1px;background:#ACA899"></div>
<div style="left:201px;top:221px;width:10px;height:17px;background:#EEE6DA"></div>
<div class="t" style="left:243px;top:223px;transform:translateX(-100%);color:#000">3</div>
<div class="t" style="left:248px;top:223px;color:#000;letter-spacing:-0.12px">10.03.2006 14:15:21</div>
<div class="t" style="left:353px;top:223px;color:#000;letter-spacing:-0.12px">10.03.2006 14:15:21</div>
<div class="t" style="left:458px;top:223px;color:#000">040349715</div>
<div class="t" style="left:518px;top:223px;color:#000;letter-spacing:-0.07px">30101810000000000715</div>
<div class="t" style="left:644px;top:223px;color:#000">БАНК "ПЕРВОМАЙСКИЙ" (ЗАО) г. КРАСНОДАР</div>
<div style="left:200px;top:238px;width:733px;height:1px;background:#ACA899"></div>
<div style="left:201px;top:240px;width:10px;height:17px;background:#EEE6DA"></div>
<div class="t" style="left:243px;top:242px;transform:translateX(-100%);color:#000">4</div>
<div class="t" style="left:248px;top:242px;color:#000;letter-spacing:-0.12px">10.03.2006 14:15:53</div>
<div class="t" style="left:353px;top:242px;color:#000;letter-spacing:-0.12px">10.03.2006 14:15:53</div>
<div class="t" style="left:458px;top:242px;color:#000">044030772</div>
<div class="t" style="left:518px;top:242px;color:#000;letter-spacing:-0.07px">30101810300000000772</div>
<div class="t" style="left:644px;top:242px;color:#000">ЗАО БАНК "СОВЕТСКИЙ" г. САНКТ-ПЕТЕРБУРГ</div>
<div style="left:200px;top:257px;width:733px;height:1px;background:#ACA899"></div>
<div style="left:201px;top:259px;width:10px;height:17px;background:#EEE6DA"></div>
<div class="t" style="left:243px;top:261px;transform:translateX(-100%);color:#000">5</div>
<div class="t" style="left:248px;top:261px;color:#000;letter-spacing:-0.12px">10.03.2006 14:16:24</div>
<div class="t" style="left:353px;top:261px;color:#000;letter-spacing:-0.12px">10.03.2006 14:16:24</div>
<div class="t" style="left:458px;top:261px;color:#000">045773702</div>
<div class="t" style="left:518px;top:261px;color:#000;letter-spacing:-0.07px">30101810500000000702</div>
<div class="t" style="left:644px;top:261px;color:#000">ФКБ "ПЕТРОКОММЕРЦ" В Г. ПЕРМИ г. ПЕРМЬ</div>
<div style="left:200px;top:276px;width:733px;height:1px;background:#ACA899"></div>
<div style="left:201px;top:278px;width:10px;height:17px;background:#EEE6DA"></div>
<div class="t" style="left:243px;top:280px;transform:translateX(-100%);color:#000">6</div>
<div class="t" style="left:248px;top:280px;color:#000;letter-spacing:-0.12px">10.03.2006 14:19:39</div>
<div class="t" style="left:353px;top:280px;color:#000;letter-spacing:-0.12px">10.03.2006 14:19:39</div>
<div class="t" style="left:458px;top:280px;color:#000">044585173</div>
<div class="t" style="left:518px;top:280px;color:#000;letter-spacing:-0.07px">30101810200000000173</div>
<div class="t" style="left:644px;top:280px;color:#000">ОАО АКБ "ПРОМИНВЕСТБАНК" г. МОСКВА</div>
<div style="left:200px;top:295px;width:733px;height:1px;background:#ACA899"></div>
<div style="left:201px;top:297px;width:10px;height:17px;background:#EEE6DA"></div>
<div style="left:212px;top:296px;width:721px;height:18px;background:#316AC5"></div>
<div style="left:212px;top:296px;width:721px;height:1px;background:repeating-linear-gradient(to right,#E8A040 0 1px,transparent 1px 2px)"></div><div style="left:212px;top:313px;width:721px;height:1px;background:repeating-linear-gradient(to right,#E8A040 0 1px,transparent 1px 2px)"></div><div style="left:212px;top:296px;width:1px;height:18px;background:repeating-linear-gradient(to bottom,#E8A040 0 1px,transparent 1px 2px)"></div><div style="left:932px;top:296px;width:1px;height:18px;background:repeating-linear-gradient(to bottom,#E8A040 0 1px,transparent 1px 2px)"></div>
<div style="left:456px;top:296px;width:59px;height:18px;background:#fff"></div>
<div style="left:456px;top:296px;width:59px;height:1px;background:repeating-linear-gradient(to right,#000 0 1px,transparent 1px 2px)"></div>
<div style="left:456px;top:313px;width:59px;height:1px;background:repeating-linear-gradient(to right,#000 0 1px,transparent 1px 2px)"></div>
<div style="left:203px;top:301px;width:0;height:0;border-top:4.5px solid transparent;border-bottom:4.5px solid transparent;border-left:5px solid #000"></div>
<div class="t" style="left:243px;top:299px;transform:translateX(-100%);color:#fff">7</div>
<div class="t" style="left:248px;top:299px;color:#fff;letter-spacing:-0.12px">10.03.2006 14:21:35</div>
<div class="t" style="left:353px;top:299px;color:#fff;letter-spacing:-0.12px">10.03.2006 14:21:35</div>
<div class="t" style="left:458px;top:299px;color:#000">045004704</div>
<div class="t" style="left:518px;top:299px;color:#fff;letter-spacing:-0.07px">30101810900000000704</div>
<div class="t" style="left:644px;top:299px;color:#fff">ООО КБ "НОВОСИБКООПБАНК" г. НОВОСИБИРСК</div>
<div style="left:200px;top:314px;width:733px;height:1px;background:#ACA899"></div>
<div style="left:201px;top:316px;width:10px;height:17px;background:#EEE6DA"></div>
<div class="t" style="left:243px;top:318px;transform:translateX(-100%);color:#000">8</div>
<div class="t" style="left:248px;top:318px;color:#000;letter-spacing:-0.12px">10.03.2006 14:25:16</div>
<div class="t" style="left:353px;top:318px;color:#000;letter-spacing:-0.12px">10.03.2006 14:25:16</div>
<div class="t" style="left:458px;top:318px;color:#000">042520827</div>
<div class="t" style="left:518px;top:318px;color:#000;letter-spacing:-0.07px">30101810900000000827</div>
<div class="t" style="left:644px;top:318px;color:#000">АКБ "РАДИАН" (ОАО) г. ИРКУТСК</div>
<div style="left:200px;top:333px;width:733px;height:1px;background:#ACA899"></div>
<div style="left:201px;top:335px;width:10px;height:17px;background:#EEE6DA"></div>
<div class="t" style="left:243px;top:337px;transform:translateX(-100%);color:#000">9</div>
<div class="t" style="left:248px;top:337px;color:#000;letter-spacing:-0.12px">10.03.2006 14:26:05</div>
<div class="t" style="left:353px;top:337px;color:#000;letter-spacing:-0.12px">10.03.2006 14:26:05</div>
<div class="t" style="left:458px;top:337px;color:#000">049205711</div>
<div class="t" style="left:518px;top:337px;color:#000;letter-spacing:-0.07px">30101810000000000711</div>
<div class="t" style="left:644px;top:337px;color:#000">ЗАО "АЛЬФА-БАНК-КАЗАНЬ" г. КАЗАНЬ</div>
<div style="left:200px;top:352px;width:733px;height:1px;background:#ACA899"></div>
<div style="left:201px;top:354px;width:10px;height:17px;background:#EEE6DA"></div>
<div class="t" style="left:243px;top:356px;transform:translateX(-100%);color:#000">10</div>
<div class="t" style="left:248px;top:356px;color:#000;letter-spacing:-0.12px">10.03.2006 14:26:31</div>
<div class="t" style="left:353px;top:356px;color:#000;letter-spacing:-0.12px">10.03.2006 14:26:31</div>
<div class="t" style="left:458px;top:356px;color:#000">044583732</div>
<div class="t" style="left:518px;top:356px;color:#000;letter-spacing:-0.07px">30101810100000000732</div>
<div class="t" style="left:644px;top:356px;color:#000">ОАО "ЛЕСПРОМБАНК" г. МОСКВА</div>
<div style="left:200px;top:371px;width:733px;height:1px;background:#ACA899"></div>
<div style="left:211px;top:181px;width:1px;height:191px;background:#ACA899"></div>
<div style="left:245px;top:181px;width:1px;height:191px;background:#ACA899"></div>
<div style="left:350px;top:181px;width:1px;height:191px;background:#ACA899"></div>
<div style="left:455px;top:181px;width:1px;height:191px;background:#ACA899"></div>
<div style="left:515px;top:181px;width:1px;height:191px;background:#ACA899"></div>
<div style="left:641px;top:181px;width:1px;height:191px;background:#ACA899"></div>
<div style="left:932px;top:181px;width:1px;height:191px;background:#ACA899"></div>
<div style="left:200px;top:584px;width:241px;height:17px;background:#EEE6D8"></div>
<div style="left:200px;top:584px;width:18px;height:17px;background:linear-gradient(to bottom,#FFFFFF,#F4F3EE 60%,#E6E2D6);border:1px solid #0C3C8C;border-radius:3px;box-shadow:inset 0 0 0 1px rgba(40,80,150,0.25)"><svg width="16" height="15" style="position:absolute;left:0;top:0" fill="#000"><rect x="2" y="3" width="2" height="9"/><path d="M4 7.5 L8.5 3 V12 Z M8.5 7.5 L13 3 V12 Z"/></svg></div>
<div style="left:219px;top:584px;width:18px;height:17px;background:linear-gradient(to bottom,#FFFFFF,#F4F3EE 60%,#E6E2D6);border:1px solid #0C3C8C;border-radius:3px;box-shadow:inset 0 0 0 1px rgba(40,80,150,0.25)"><svg width="16" height="15" style="position:absolute;left:0;top:0" fill="#000"><path d="M3 7.5 L7.5 3 V12 Z M7.5 7.5 L12 3 V12 Z"/></svg></div>
<div style="left:238px;top:584px;width:18px;height:17px;background:linear-gradient(to bottom,#FFFFFF,#F4F3EE 60%,#E6E2D6);border:1px solid #0C3C8C;border-radius:3px;box-shadow:inset 0 0 0 1px rgba(40,80,150,0.25)"><svg width="16" height="15" style="position:absolute;left:0;top:0" fill="#000"><path d="M5 7.5 L10 3 V12 Z"/></svg></div>
<div style="left:257px;top:584px;width:18px;height:17px;background:linear-gradient(to bottom,#FFFFFF,#F4F3EE 60%,#E6E2D6);border:1px solid #0C3C8C;border-radius:3px;box-shadow:inset 0 0 0 1px rgba(40,80,150,0.25)"><svg width="16" height="15" style="position:absolute;left:0;top:0" fill="#000"><path d="M5.5 3 L10.5 7.5 L5.5 12 Z"/></svg></div>
<div style="left:276px;top:584px;width:18px;height:17px;background:linear-gradient(to bottom,#FFFFFF,#F4F3EE 60%,#E6E2D6);border:1px solid #0C3C8C;border-radius:3px;box-shadow:inset 0 0 0 1px rgba(40,80,150,0.25)"><svg width="16" height="15" style="position:absolute;left:0;top:0" fill="#000"><path d="M3 3 L7.5 7.5 L3 12 Z M7.5 3 L12 7.5 L7.5 12 Z"/></svg></div>
<div style="left:295px;top:584px;width:18px;height:17px;background:linear-gradient(to bottom,#FFFFFF,#F4F3EE 60%,#E6E2D6);border:1px solid #0C3C8C;border-radius:3px;box-shadow:inset 0 0 0 1px rgba(40,80,150,0.25)"><svg width="16" height="15" style="position:absolute;left:0;top:0" fill="#000"><path d="M2 3 L6.5 7.5 L2 12 Z M6.5 3 L11 7.5 L6.5 12 Z"/><rect x="11" y="3" width="2" height="9"/></svg></div>
<div style="left:314px;top:584px;width:18px;height:17px;background:linear-gradient(to bottom,#FFFFFF,#F4F3EE 60%,#E6E2D6);border:1px solid #0C3C8C;border-radius:3px;box-shadow:inset 0 0 0 1px rgba(40,80,150,0.25)"><svg width="16" height="15" style="position:absolute;left:0;top:0" fill="#000"><path d="M2.5 10 Q2.5 4 7.5 4 Q10.5 4 11.5 7" stroke="#0818A8" stroke-width="1.6" fill="none"/><path d="M9 11.5 L14 6.5 V11.5 Z" fill="#0818A8"/></svg></div>
<div style="left:333px;top:584px;width:18px;height:17px;background:linear-gradient(to bottom,#FFFFFF,#F4F3EE 60%,#E6E2D6);border:1px solid #0C3C8C;border-radius:3px;box-shadow:inset 0 0 0 1px rgba(40,80,150,0.25)"><svg width="16" height="15" style="position:absolute;left:0;top:0" fill="#000"><path d="M7.5 3 V12 M3 7.5 H12 M4.5 4.5 L10.5 10.5 M10.5 4.5 L4.5 10.5" stroke="#000" stroke-width="1.1"/></svg></div>
<div style="left:352px;top:584px;width:18px;height:17px;background:#EFEFE6;border:1px solid #DCDCCC;border-radius:3px"><svg width="16" height="15" style="position:absolute;left:0;top:0" fill="#000"><path d="M2 2 L6 5 L2 8 Z" fill="#B0B0A0"/><path d="M9 5 V13 M5 9 H13 M6 6 L12 12 M12 6 L6 12" stroke="#B4B4A4" stroke-width="1.3"/><circle cx="9" cy="9" r="2.2" fill="#B4B4A4"/></svg></div>
<div style="left:371px;top:584px;width:18px;height:17px;background:linear-gradient(to bottom,#FFFFFF,#F4F3EE 60%,#E6E2D6);border:1px solid #0C3C8C;border-radius:3px;box-shadow:inset 0 0 0 1px rgba(40,80,150,0.25)"><svg width="16" height="15" style="position:absolute;left:0;top:0" fill="#000"><path d="M2 3.5 H14 M2.5 5.5 H13.5" stroke="#000" stroke-width="1.2"/><path d="M2 3.5 L7 9 M14 3.5 L9.5 9" stroke="#000" stroke-width="1.2"/><rect x="6.5" y="9.5" width="4" height="3.5" fill="#fff" stroke="#000"/></svg></div>
<div style="left:441px;top:584px;width:577px;height:17px;background:linear-gradient(to bottom,#F0EEE6 0,#F8F8F2 3px,#FCFCF8 8px,#F6F4EE 17px)"></div>
<div style="left:441px;top:585px;width:16px;height:16px;background:#F4F3EE;border:1px solid #E4E2DA;border-radius:2px"><svg width="14" height="14" style="position:absolute;left:0;top:0"><path d="M8.5 4 L5 7.5 L8.5 11" stroke="#C8C6BA" stroke-width="2" fill="none"/></svg></div>
<div style="left:1001px;top:585px;width:16px;height:16px;background:#F4F3EE;border:1px solid #E4E2DA;border-radius:2px"><svg width="14" height="14" style="position:absolute;left:0;top:0"><path d="M5.5 4 L9 7.5 L5.5 11" stroke="#C8C6BA" stroke-width="2" fill="none"/></svg></div>
<div style="left:4px;top:602px;width:1016px;height:27px;background:linear-gradient(to bottom,#FFFFFF 0px,#FFFFFF 1px,#EEEEE6 1px,#EEEEE6 7px,#ECECDC 7px,#ECECDC 17px,#EEE6D8 17px,#EEE6D8 23px,#E4E4D0 23px,#E4E4D0 25px,#B8B8A4 25px,#B8B8A4 26px,#A8A894 26px,#A8A894 27px)"></div>
<div style="left:199px;top:601px;width:820px;height:1px;background:#7F9DB9"></div>
<div style="left:9px;top:609px;width:2px;height:2px;background:#FFFFFF"></div><div style="left:8px;top:608px;width:2px;height:2px;background:#8E8E7E"></div><div style="left:9px;top:613px;width:2px;height:2px;background:#FFFFFF"></div><div style="left:8px;top:612px;width:2px;height:2px;background:#8E8E7E"></div><div style="left:9px;top:617px;width:2px;height:2px;background:#FFFFFF"></div><div style="left:8px;top:616px;width:2px;height:2px;background:#8E8E7E"></div><div style="left:9px;top:621px;width:2px;height:2px;background:#FFFFFF"></div><div style="left:8px;top:620px;width:2px;height:2px;background:#8E8E7E"></div>
<div style="left:20px;top:607px;width:14px;height:17px"><svg width="14" height="17" viewBox="0 0 14 17"><defs><linearGradient id="cgg" x1="0" y1="0" x2="1" y2="0"><stop offset="0" stop-color="#909090"/><stop offset="0.35" stop-color="#E4E4E4"/><stop offset="1" stop-color="#A8A8A8"/></linearGradient></defs><rect x="0.5" y="1.5" width="12" height="14" rx="2" fill="url(#cgg)" stroke="#5C5C5C"/><rect x="4.5" y="0.5" width="5" height="3" fill="#E8E8E8" stroke="#5C5C5C"/><path d="M4.5 6.5 H11 L13.5 9 V15.5 H4.5 Z" fill="#FAFAFA" stroke="#8C8C8C"/><path d="M6 9.5 H12 M6 11.5 H12 M6 13.5 H12" stroke="#5C6C64"/></svg></div>
<div class="t" style="left:38px;top:610px;">Банки Украины</div>
<div style="left:124px;top:604px;width:99px;height:22px;background:#fff;border:1px solid #8CA0C0;border-radius:3px"></div>
<div style="left:131px;top:607px;width:14px;height:17px"><svg width="14" height="17" viewBox="0 0 14 17"><defs><linearGradient id="cgg" x1="0" y1="0" x2="1" y2="0"><stop offset="0" stop-color="#909090"/><stop offset="0.35" stop-color="#E4E4E4"/><stop offset="1" stop-color="#A8A8A8"/></linearGradient></defs><rect x="0.5" y="1.5" width="12" height="14" rx="2" fill="url(#cgg)" stroke="#5C5C5C"/><rect x="4.5" y="0.5" width="5" height="3" fill="#E8E8E8" stroke="#5C5C5C"/><path d="M4.5 6.5 H11 L13.5 9 V15.5 H4.5 Z" fill="#FAFAFA" stroke="#8C8C8C"/><path d="M6 9.5 H12 M6 11.5 H12 M6 13.5 H12" stroke="#5C6C64"/></svg></div>
<div class="t" style="left:149px;top:610px;">Банки России</div>
<div style="left:4px;top:629px;width:1016px;height:80px;background:linear-gradient(to bottom,#F8F8F0 0px,#F8F8F0 1px,#C8C8B8 1px,#C8C8B8 2px,#F8F8F0 2px,#F8F8F0 3px,#ECE9D8 3px,#ECE9D8 80px)"></div>
<div style="left:6px;top:632px;width:1012px;height:22px;background:linear-gradient(to bottom,#FFFFFF 0,#FFFFFF 1px,#F6F6F0 1px,#F4F4EE 60%,#F0F0E8);border:1px solid #C8C6B2;border-radius:3px"></div>
<div class="t" style="left:11px;top:637px;">dockpButtom</div>
<div style="left:986px;top:637px;width:11px;height:14px"><svg width="11" height="14" viewBox="0 0 11 14"><path d="M2 1.5 H9 M3.5 1.5 V6 L1 9 H10 L7.5 6 V1.5" fill="#CFE0FF" stroke="#1848C8" stroke-width="1.4"/><path d="M5.5 9 V13.5" stroke="#1848C8" stroke-width="1.6"/></svg></div>
<div style="left:1000px;top:637px;width:13px;height:13px;background:linear-gradient(135deg,#F08868,#D84020);border-radius:2px"><svg width="13" height="13" style="position:absolute;left:0;top:0"><path d="M3.5 3.5 L9.5 9.5 M9.5 3.5 L3.5 9.5" stroke="#fff" stroke-width="2"/></svg></div>
<div style="left:6px;top:656px;width:1012px;height:52px;background:#fff;border:1px solid #7F9DB9"></div>
<div style="left:73px;top:657px;width:927px;height:18px;background:#EEE6DA"></div>
<div style="left:7px;top:675px;width:993px;height:1px;background:#ACA899"></div>
<div style="left:72px;top:657px;width:1px;height:18px;background:#ACA899"></div>
<div style="left:208px;top:657px;width:1px;height:18px;background:#ACA899"></div>
<div style="left:999px;top:657px;width:1px;height:18px;background:#ACA899"></div>
<div class="t" style="left:70px;top:660px;transform:translateX(-100%)">0</div>
<div class="t" style="left:75px;top:660px;">16.03.2006 11:56:03</div>
<div class="t" style="left:211px;top:660px;">Успешная загрузка</div>
<div style="left:1000px;top:657px;width:17px;height:50px;background:#FAFAF6"></div>
<div style="left:1001px;top:657px;width:15px;height:16px;background:linear-gradient(135deg,#E0EAFE,#BCD0F8);border:1px solid #B4C8F4;border-bottom-color:#8CA4E0;border-radius:2px"><svg width="13" height="14" style="position:absolute;left:0;top:0"><path d="M3 8.5 L6.5 5 L10 8.5" stroke="#4D6185" stroke-width="2" fill="none"/></svg></div>
<div style="left:1001px;top:677px;width:15px;height:11px;background:linear-gradient(135deg,#E0EAFE,#BCD0F8);border:1px solid #B4C8F4;border-bottom-color:#8CA4E0;border-radius:2px"><div style="left:3px;top:2px;width:8px;height:1px;background:#90ACEC"></div><div style="left:3px;top:4px;width:8px;height:1px;background:#90ACEC"></div><div style="left:3px;top:6px;width:8px;height:1px;background:#90ACEC"></div><div style="left:3px;top:8px;width:8px;height:1px;background:#90ACEC"></div></div>
<div style="left:1001px;top:690px;width:15px;height:16px;background:linear-gradient(135deg,#E0EAFE,#BCD0F8);border:1px solid #B4C8F4;border-bottom-color:#8CA4E0;border-radius:2px"><svg width="13" height="14" style="position:absolute;left:0;top:0"><path d="M3 5.5 L6.5 9 L10 5.5" stroke="#4D6185" stroke-width="2" fill="none"/></svg></div>
<div style="left:4px;top:708px;width:1016px;height:22px;background:linear-gradient(to bottom,#E4E2D4 0px,#E4E2D4 1px,#B8B8A4 1px,#B8B8A4 2px,#8C8C78 2px,#8C8C78 3px,#A8A894 3px,#A8A894 4px,#C8C8B4 4px,#C8C8B4 5px,#E0E0CC 5px,#E0E0CC 6px,#ECECD8 6px,#ECECD8 7px,#EEE6D8 7px,#EEE6D8 16px,#EEE6D8 16px,#E2E2CE 16px,#E2E2CE 21px,#E2E2CE 21px,#F4F0D8 21px,#F4F0D8 22px)"></div>
<div style="left:1017px;top:718px;width:2px;height:2px;background:#FFFFFF"></div>
<div style="left:1016px;top:717px;width:2px;height:2px;background:#B8B4A0"></div>
<div style="left:1013px;top:722px;width:2px;height:2px;background:#FFFFFF"></div>
<div style="left:1012px;top:721px;width:2px;height:2px;background:#B8B4A0"></div>
<div style="left:1017px;top:722px;width:2px;height:2px;background:#FFFFFF"></div>
<div style="left:1016px;top:721px;width:2px;height:2px;background:#B8B4A0"></div>
<div style="left:1009px;top:726px;width:2px;height:2px;background:#FFFFFF"></div>
<div style="left:1008px;top:725px;width:2px;height:2px;background:#B8B4A0"></div>
<div style="left:1013px;top:726px;width:2px;height:2px;background:#FFFFFF"></div>
<div style="left:1012px;top:725px;width:2px;height:2px;background:#B8B4A0"></div>
<div style="left:1017px;top:726px;width:2px;height:2px;background:#FFFFFF"></div>
<div style="left:1016px;top:725px;width:2px;height:2px;background:#B8B4A0"></div>
</body></html>
